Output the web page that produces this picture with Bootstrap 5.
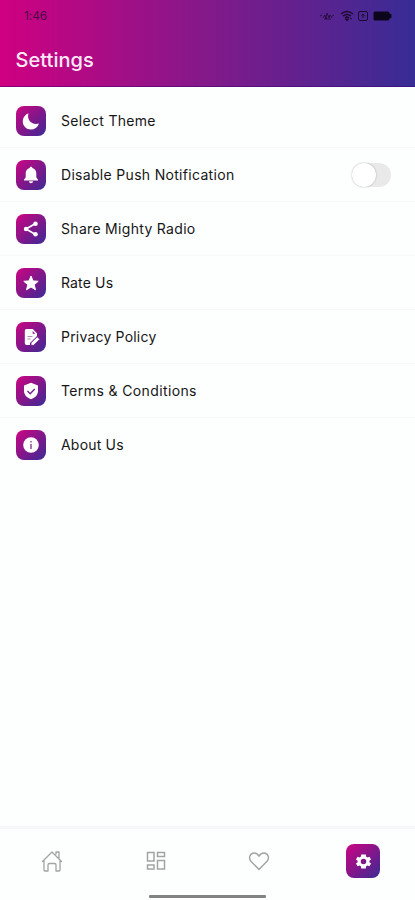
<!DOCTYPE html>
<html lang="en">
<head>
<meta charset="utf-8">
<meta name="viewport" content="width=device-width, initial-scale=1">
<title>Settings</title>
<link href="https://cdn.jsdelivr.net/npm/bootstrap@5.3.0/dist/css/bootstrap.min.css" rel="stylesheet">
<style>
  body { font-family: Inter, "Open Sans", sans-serif; background: #fdfefe; color: #161616; }
  .app-header { height: 87px; background: linear-gradient(90deg, #cf0081, #83198a 50%, #382c95); border-bottom: 1px solid rgba(50, 0, 110, .45); }
  .status-bar { height: 32px; padding: 0 22px 0 24px; color: #16041f; }
  .clock { font-size: 12px; color: #4d0848; letter-spacing: -.1px; }
  .page-title { font-size: 20px; line-height: 26px; margin: 15px 0 0 15.500px; font-weight: 500; letter-spacing: .05px; color: #ffe9f8; }
  .settings-list { padding-top: 7px; }
  .setting-row { height: 54px; padding: 0 24px 0 16px; gap: 15px; background: transparent; border-color: #f6f7f8; color: inherit; font-size: 14px; }
  .setting-row:last-child { padding-bottom: 1px; }
  .tile { width: 30px; height: 30px; border-radius: 8px; background: linear-gradient(135deg, #cd0582, #84168a 50%, #3b2b95); color: #fff; }
  .tile-lg { width: 34px; height: 34px; }
  .setting-switch { width: 39px !important; height: 24px; margin: 0 !important; border: 0; background-color: #e9e9e9; background-image: none !important; position: relative; }
  .setting-switch::before { content: ""; display: block; width: 24px; height: 24px; border-radius: 50%; background: #fff; box-shadow: 0 0 2px rgba(0, 0, 0, .3); }
  .bottom-nav { height: 74px; border-top: 3px solid #f6f7f8; color: #a3a3a3; }
  .bottom-nav .nav-link { height: 66px; padding: 0 0 2px; color: inherit; }
  .home-bar { width: 117px; height: 3px; background: #828282; border-radius: 1px; }
  .t1, .t2, .t3 { letter-spacing: .31px; }
  .t4 { letter-spacing: .15px; }
  .t5, .t7 { letter-spacing: .2px; }
  .t6 { letter-spacing: .38px; }
</style>
</head>
<body>
<div class="d-flex flex-column vh-100 overflow-hidden">
  <header class="app-header flex-shrink-0">
    <div class="status-bar d-flex align-items-center justify-content-between">
      <span class="clock">1:46</span>
      <svg width="76" height="14" viewBox="0 0 76 14" fill="none" stroke="currentColor" stroke-width="1" opacity=".85">
        <path d="M3 7l2-1M6 9l2-3 1 4 1-6 2 5 1-3 2 3M7 10h7M15 7l2-1" opacity=".75"/>
        <path d="M24 5q6-5 12 0M26 7q4-3 8 0M28 9q2-2 4 0" stroke-width="1.500"/><path d="M28.500 10h3l-1.500 2z" fill="currentColor"/><path d="M33 9l2 1"/>
        <rect x="41.500" y="2.500" width="9" height="9" rx="1.500"/><path d="M46 5v4M44.500 6.500L46 5l1.500 1.500"/>
        <path d="M58 2.500h13q1.500 0 1.500 2l2 1v3l-2 1q0 2-1.500 2H58q-1.500 0-1.500-1.500V4q0-1.500 1.500-1.500z" fill="#030008" stroke="none"/>
      </svg>
    </div>
    <h1 class="page-title">Settings</h1>
  </header>

  <main class="settings-list list-group list-group-flush flex-grow-1">
    <div class="setting-row list-group-item d-flex align-items-center">
      <span class="tile d-flex align-items-center justify-content-center flex-shrink-0"><svg width="20" height="20" viewBox="0 0 20 20" fill="currentColor"><path d="M7.500 2.200C5.500 8.500 10.500 14.500 18 12.500 16.500 16.500 13.500 18.500 10 18.500 5.500 18.500 1.800 15 1.800 10.500 1.800 6.700 4.200 3.400 7.500 2.200z"/></svg></span>
      <span class="t1">Select Theme</span>
    </div>
    <div class="setting-row list-group-item d-flex align-items-center">
      <span class="tile d-flex align-items-center justify-content-center flex-shrink-0"><svg width="20" height="20" viewBox="0 0 20 20" fill="currentColor"><path d="M10 1.800c.8 0 1.300.5 1.300 1.300 2.600.7 4 2.700 4 5.400v3.700l1.700 2.500v.8H3v-.8l1.700-2.500V8.500c0-2.700 1.400-4.700 4-5.400 0-.8.500-1.300 1.300-1.300zM8 16.300h4c0 1.200-.8 2-2 2s-2-.8-2-2z"/></svg></span>
      <label class="t2 flex-grow-1" for="push">Disable Push Notification</label>
      <div class="form-check form-switch p-0 m-0 d-flex"><input id="push" class="form-check-input setting-switch" type="checkbox" role="switch"></div>
    </div>
    <div class="setting-row list-group-item d-flex align-items-center">
      <span class="tile d-flex align-items-center justify-content-center flex-shrink-0"><svg width="18" height="18" viewBox="0 0 20 20" fill="currentColor"><path d="M14.500 4.200L4.500 10l10 5.800" fill="none" stroke="currentColor" stroke-width="1.900"/><circle cx="15" cy="4.200" r="2.500"/><circle cx="4.500" cy="10" r="2.500"/><circle cx="15" cy="15.800" r="2.500"/></svg></span>
      <span class="t3">Share Mighty Radio</span>
    </div>
    <div class="setting-row list-group-item d-flex align-items-center">
      <span class="tile d-flex align-items-center justify-content-center flex-shrink-0"><svg width="20" height="20" viewBox="0 0 20 20" fill="currentColor" stroke="currentColor" stroke-linejoin="round"><path d="M10 3l2 4.900 5.200.4-4 3.400 1.300 5.100L10 14l-4.500 2.800 1.300-5.100-4-3.400 5.200-.4z"/></svg></span>
      <span class="t4">Rate Us</span>
    </div>
    <div class="setting-row list-group-item d-flex align-items-center">
      <span class="tile d-flex align-items-center justify-content-center flex-shrink-0"><svg width="20" height="20" viewBox="0 0 20 20" fill="currentColor"><path d="M5.500 2h6.200L16 6.300v3L9 16v2H5.500Q3.800 18 3.800 16.300V3.700Q3.800 2 5.500 2z"/><path d="M11.700 4v2.800h2.700z" fill="#8c1889"/><path d="M6.500 9.500h5M6.500 12h3" stroke="#b78abf" stroke-width="1"/><path d="M10 18.300v-2.600l6.200-6 2.600 2.600-6.200 6z" stroke="#70208e" stroke-width=".8"/></svg></span>
      <span class="t5">Privacy Policy</span>
    </div>
    <div class="setting-row list-group-item d-flex align-items-center">
      <span class="tile d-flex align-items-center justify-content-center flex-shrink-0"><svg width="20" height="20" viewBox="0 0 20 20" fill="currentColor"><path d="M10 1.800l7 2.700v5.300c0 4-2.600 7-7 8.500-4.400-1.500-7-4.500-7-8.500V4.500z"/><path d="M6.500 10l2.700 2.700 4.500-4.800" fill="none" stroke="#74208e" stroke-width="1.400"/></svg></span>
      <span class="t6">Terms &amp; Conditions</span>
    </div>
    <div class="setting-row list-group-item d-flex align-items-center">
      <span class="tile d-flex align-items-center justify-content-center flex-shrink-0"><svg width="20" height="20" viewBox="0 0 20 20" fill="currentColor"><circle cx="10" cy="10" r="7.800"/><path d="M10 9v5M10 6v1.500" stroke="#8d4b9c" stroke-width="1.500"/></svg></span>
      <span class="t7">About Us</span>
    </div>
  </main>

  <footer class="bottom-nav flex-shrink-0">
    <nav class="nav nav-justified">
      <a class="nav-link nav-item d-flex align-items-center justify-content-center" href="#" aria-label="Home"><svg width="24" height="24" viewBox="0 0 24 24" fill="none" stroke="currentColor" stroke-width="1.300" stroke-linejoin="round" stroke-linecap="round"><path d="M2.500 12.500L12 3l9.500 9.500M16 5V3h3v6M4 12v9q0 1 1 1h3v-6q0-1.500 1.500-1.500h5q1.500 0 1.500 1.500v6h3q1 0 1-1v-9"/></svg></a>
      <a class="nav-link nav-item d-flex align-items-center justify-content-center" href="#" aria-label="Categories"><svg width="20" height="20" viewBox="0 0 20 20" fill="none" stroke="currentColor" stroke-width="1.500"><path d="M1.500 1.500h6.500v8.500H1.500zM11.500 1.500h7v4h-7zM1.500 14h6.500v4H1.500zM11.500 9.500h7v8.500h-7z"/></svg></a>
      <a class="nav-link nav-item d-flex align-items-center justify-content-center" href="#" aria-label="Favourites"><svg width="22" height="22" viewBox="0 0 22 22" fill="none" stroke="currentColor" stroke-width="1.400" stroke-linejoin="round"><path d="M11 19.500L3 11.300C.2 8.300 1.800 3 6 3c2.200 0 4 1.300 5 3.300C12 4.300 13.800 3 16 3c4.200 0 5.800 5.300 3 8.300z"/></svg></a>
      <a class="nav-link nav-item d-flex align-items-center justify-content-center" href="#" aria-label="Settings"><span class="tile tile-lg d-flex align-items-center justify-content-center"><svg width="19" height="19" viewBox="0 0 24 24" fill="currentColor"><path fill-rule="evenodd" d="M19.400 13a7.500 7.500 0 0 0 0-2l2.100-1.600-2-3.500-2.500 1a7.500 7.500 0 0 0-1.700-1L15 3.200H9L8.700 5.900a7.500 7.500 0 0 0-1.700 1l-2.500-1-2 3.500L4.600 11a7.500 7.500 0 0 0 0 2l-2.100 1.600 2 3.500 2.500-1a7.500 7.500 0 0 0 1.700 1l.3 2.700h6l.3-2.700a7.500 7.500 0 0 0 1.700-1l2.500 1 2-3.500zM12 8.500a3.500 3.500 0 1 1 0 7 3.500 3.500 0 0 1 0-7z"/></svg></span></a>
    </nav>
    <div class="home-bar mx-auto"></div>
  </footer>
</div>
<script src="https://cdn.jsdelivr.net/npm/bootstrap@5.3.0/dist/js/bootstrap.bundle.min.js"></script>
</body>
</html>
